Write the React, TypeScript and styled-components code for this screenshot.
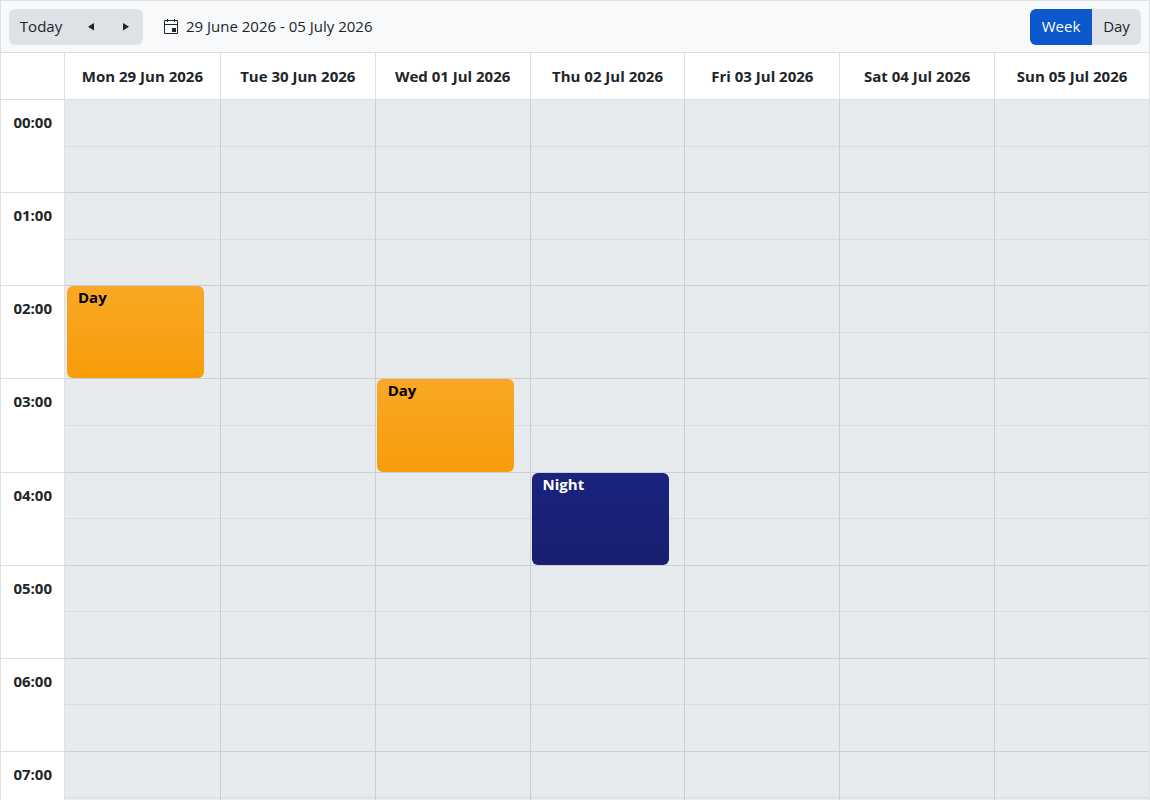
import React from "react";
import styled, { createGlobalStyle, css } from "styled-components";

const GlobalStyle = createGlobalStyle`
  *, *::before, *::after { box-sizing: border-box; }
  body {
    margin: 0;
    color: #212529;
    background: #ffffff;
    font-family: "Segoe UI", "Open Sans", "Noto Sans", sans-serif;
    font-size: 15px;
    line-height: 20px;
  }
`;

const Scheduler = styled.main`
  display: flex;
  flex-direction: column;
  height: 100vh;
  border: 1px solid #dee0e2;
  border-bottom: 0;
`;

const Toolbar = styled.header`
  display: flex;
  align-items: center;
  flex: none;
  gap: 8px;
  padding: 8px 8px 7px;
  background: #f8f9fb;
  border-bottom: 1px solid #dadcdf;
`;

const ButtonGroup = styled.div`
  display: flex;
  height: 36px;
  overflow: hidden;
  border-radius: 6px;
  background: #dee2e6;
`;

const Button = styled.button<{ $width: number; $selected?: boolean }>`
  display: flex;
  align-items: center;
  justify-content: center;
  width: ${(p) => p.$width}px;
  padding: 0 0 2px;
  border: 0;
  font: inherit;
  cursor: pointer;
  color: ${(p) => (p.$selected ? "#ffffff" : "#212529")};
  background: ${(p) => (p.$selected ? "#0a58ca" : "transparent")};
`;

const RangeButton = styled.button`
  display: flex;
  align-items: center;
  gap: 7px;
  padding: 0 12px 2px;
  border: 0;
  background: none;
  color: inherit;
  font: inherit;
  cursor: pointer;
`;

const Spacer = styled.div`
  flex: 1;
`;

const columns = css`
  display: grid;
  grid-template-columns: 64px repeat(7, minmax(0, 1fr));
`;

const DateHeader = styled.div`
  ${columns}
  flex: none;
  border-bottom: 1px solid #dee0e2;
`;

const Corner = styled.div`
  border-right: 1px solid #dee0e2;
`;

const DateCell = styled.div<{ $first: boolean }>`
  padding: 13px 0;
  text-align: center;
  white-space: nowrap;
  font-weight: 700;
  border-left: ${(p) => (p.$first ? "0" : "1px solid #dee0e2")};
`;

const Body = styled.div`
  flex: 1;
  min-height: 0;
  overflow-y: auto;
  scrollbar-width: none;
`;

const TimeGrid = styled.div`
  ${columns}
  grid-template-rows: repeat(48, minmax(0, 1fr));
  height: 2235px;
`;

const HourLabel = styled.div<{ $hour: number }>`
  grid-column: 1;
  grid-row: ${(p) => p.$hour * 2 + 1} / span 2;
  padding: 12px;
  text-align: right;
  font-weight: 700;
  border-right: 1px solid #dee0e2;
  border-bottom: 1px solid #dee0e2;
`;

const Slot = styled.div<{ $day: number; $row: number }>`
  grid-column: ${(p) => p.$day + 2};
  grid-row: ${(p) => p.$row + 1};
  background: #e8ebee;
  border-bottom: 1px ${(p) => (p.$row % 2 ? "solid" : "dotted")} #cbcfd2;
  border-left: ${(p) => (p.$day ? "1px solid #cbcfd2" : "0")};
`;

const Shift = styled.article<{ $day: number; $hour: number; $night: boolean }>`
  grid-column: ${(p) => p.$day + 2};
  grid-row: ${(p) => p.$hour * 2 + 1} / span 2;
  z-index: 1;
  width: 137px;
  margin: 0 0 1px 2px;
  padding: 1px 11px;
  border-radius: 6px;
  font-weight: 700;
  color: ${(p) => (p.$night ? "#ffffff" : "#000000")};
  background: ${(p) =>
    p.$night
      ? "linear-gradient(#1a237e, #171f6f)"
      : "linear-gradient(#f9a825, #f89c0a)"};
`;

const days = [
  "Mon 29 Jun 2026",
  "Tue 30 Jun 2026",
  "Wed 01 Jul 2026",
  "Thu 02 Jul 2026",
  "Fri 03 Jul 2026",
  "Sat 04 Jul 2026",
  "Sun 05 Jul 2026",
];

const shifts = [
  { title: "Day", day: 0, hour: 2 },
  { title: "Day", day: 2, hour: 3 },
  { title: "Night", day: 3, hour: 4 },
];

const hours = Array.from({ length: 24 }, (_, i) => i);
const halfHours = Array.from({ length: 48 }, (_, i) => i);

const Caret = ({ left }: { left?: boolean }) => (
  <svg width="16" height="16" viewBox="0 0 16 16" fill="currentColor" aria-hidden="true">
    <path d={left ? "M11 5v7.5L5 8.75z" : "M5 5v7.5l6-3.75z"} />
  </svg>
);

const CalendarIcon = () => (
  <svg width="16" height="16" viewBox="0 0 16 16" fill="currentColor" aria-hidden="true">
    <path
      fillRule="evenodd"
      d="M4 1h1v1h6V1h1v1h2a1 1 0 0 1 1 1v12a1 1 0 0 1-1 1H2a1 1 0 0 1-1-1V3a1 1 0 0 1 1-1h2zM2 3v3h12V3h-2v1h-1V3H5v1H4V3zm0 4v8h12V7z"
    />
    <path d="M9 10h4v4H9z" />
  </svg>
);

export default function App() {
  return (
    <>
      <GlobalStyle />
      <Scheduler>
        <Toolbar>
          <ButtonGroup>
            <Button $width={64}>Today</Button>
            <Button $width={35} aria-label="Previous">
              <Caret left />
            </Button>
            <Button $width={35} aria-label="Next">
              <Caret />
            </Button>
          </ButtonGroup>
          <RangeButton>
            <CalendarIcon />
            29 June 2026 - 05 July 2026
          </RangeButton>
          <Spacer />
          <ButtonGroup>
            <Button $width={62} $selected>
              Week
            </Button>
            <Button $width={49}>Day</Button>
          </ButtonGroup>
        </Toolbar>
        <DateHeader>
          <Corner />
          {days.map((day, i) => (
            <DateCell key={day} $first={i === 0}>
              {day}
            </DateCell>
          ))}
        </DateHeader>
        <Body>
          <TimeGrid>
            {hours.map((hour) => (
              <HourLabel key={hour} $hour={hour}>
                {String(hour).padStart(2, "0")}:00
              </HourLabel>
            ))}
            {halfHours.map((row) =>
              days.map((day, i) => <Slot key={day + row} $day={i} $row={row} />)
            )}
            {shifts.map((s) => (
              <Shift
                key={s.day}
                $day={s.day}
                $hour={s.hour}
                $night={s.title === "Night"}
              >
                {s.title}
              </Shift>
            ))}
          </TimeGrid>
        </Body>
      </Scheduler>
    </>
  );
}
